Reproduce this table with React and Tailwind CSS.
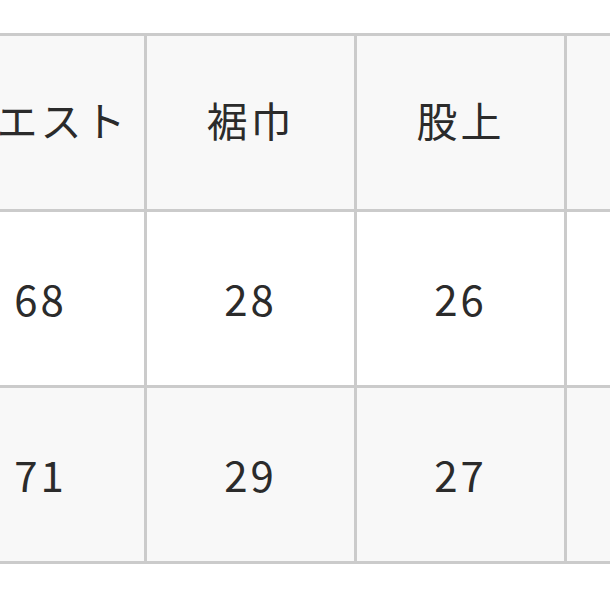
import React from 'react';

const HEADERS = ['ウエスト', '裾巾', '股上', '股下'];
const ROWS = [
  ['68', '28', '26', '70'],
  ['71', '29', '27', '72'],
];

export default function App() {
  return (
    <div
      className="w-[610px] h-[610px] overflow-hidden bg-white pt-[33px] text-[#2b2b2b]"
      style={{ fontFamily: '"Noto Sans CJK JP", "Noto Sans", sans-serif' }}
    >
      <div className="-ml-[66px] w-max grid grid-cols-[repeat(4,207px)] auto-rows-[173px] gap-[3px] p-[3px] bg-[#cbcbcb]">
        {HEADERS.map(h => (
          <div key={h} className="bg-[#f8f8f8] flex items-center justify-center pb-[6px] text-[41px] tracking-[3px]">
            {h}
          </div>
        ))}
        {ROWS.map((row, i) =>
          row.map((v, j) => (
            <div
              key={`${i}-${j}`}
              className={
                (i % 2 === 0 ? 'bg-white' : 'bg-[#f8f8f8]') +
                ' flex items-center justify-center pb-[2px] text-[42px] tracking-[3px]'
              }
            >
              {v}
            </div>
          ))
        )}
      </div>
    </div>
  );
}
